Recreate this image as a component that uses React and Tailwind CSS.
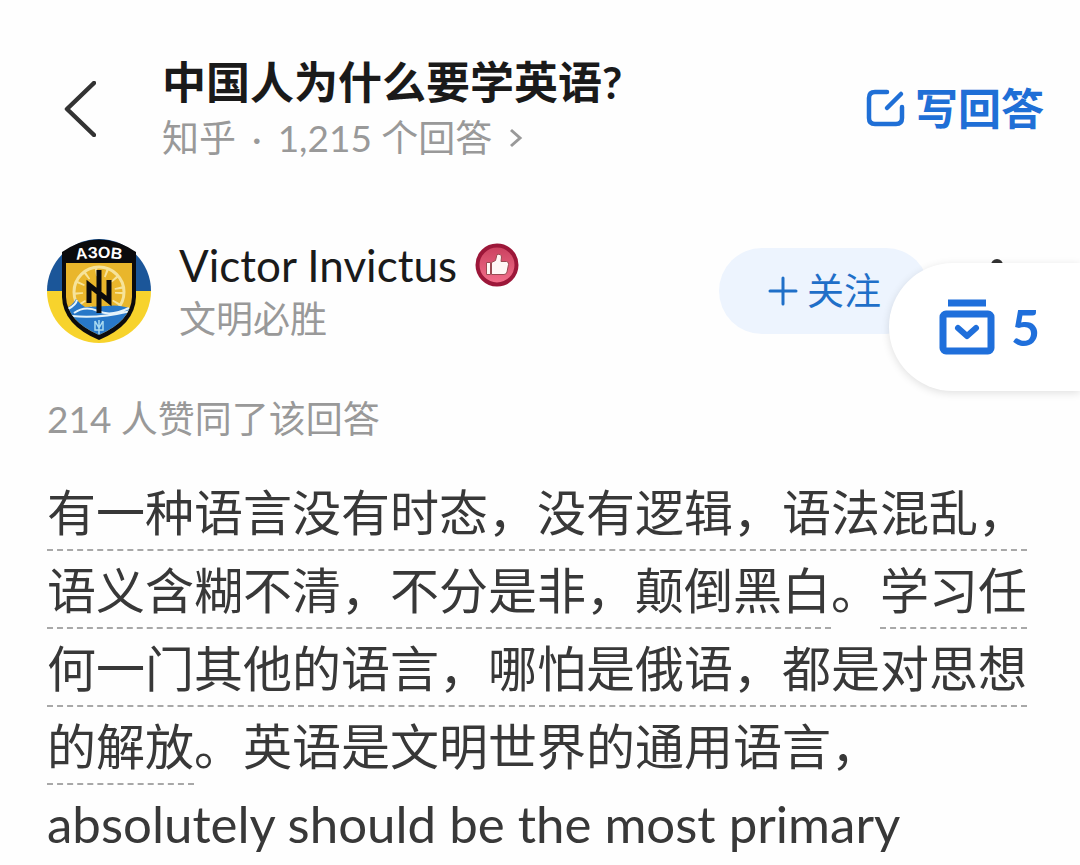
import React from 'react';

const answer = {
  question: '中国人为什么要学英语?',
  source: '知乎',
  answerCount: '1,215',
  author: 'Victor Invictus',
  bio: '文明必胜',
  votes: 214,
  pending: 5,
};

const BackIcon = () => (
  <svg className="w-8 h-14" viewBox="0 0 32 56" fill="none" stroke="#333" strokeWidth="4.5" strokeLinecap="round" strokeLinejoin="round">
    <path d="M30 2 3 28 30 54" />
  </svg>
);

const WriteIcon = () => (
  <svg className="w-10 h-10" viewBox="0 0 40 40" fill="none" stroke="#1f6fd6" strokeWidth="4.5" strokeLinecap="round">
    <path d="M22 3H10Q4 3 4 9V29Q4 35 10 35H31Q37 35 37 29V18" />
    <path d="M22 19 36 5" />
  </svg>
);

const StackIcon = () => (
  <svg className="w-14 h-14" viewBox="0 0 56 56" fill="none" stroke="#1f6fdb">
    <path d="M9 4H47" strokeWidth="7" />
    <rect x="4" y="15" width="48" height="37" rx="3" strokeWidth="7" />
    <path d="M19 29 28 37 37 29" strokeWidth="6" strokeLinecap="round" strokeLinejoin="round" />
  </svg>
);

const BadgeIcon = () => (
  <svg className="w-11 h-11" viewBox="0 0 44 44">
    <defs>
      <linearGradient id="badge" x1="0" y1="0" x2="0" y2="1">
        <stop offset="0" stopColor="#c9405e" />
        <stop offset="1" stopColor="#f4708c" />
      </linearGradient>
    </defs>
    <circle cx="22" cy="22" r="19.5" fill="url(#badge)" stroke="#9c1739" strokeWidth="4" />
    <path
      d="M11.5 19.500h4v12h-4zM16.500 19.500 20.500 17.500 22 11.500Q26 10.500 26.500 14L26 18.500H31.500Q34 19 33.500 21.500L32 29Q31.500 31.500 29 31.500H16.500Z"
      fill="#fff8f6"
      stroke="#9b4a52"
      strokeWidth="1"
      strokeLinejoin="round"
    />
  </svg>
);

const Avatar = () => (
  <svg className="w-26 h-26 shrink-0" viewBox="0 0 104 104" role="img" aria-label={answer.author}>
    <defs>
      <clipPath id="disc">
        <circle cx="52" cy="52" r="52" />
      </clipPath>
      <clipPath id="shield">
        <path d="M19 24H85V58Q84 82 52 96Q20 82 19 58Z" />
      </clipPath>
      <path id="arc" d="M14 24Q52 14 90 24" />
    </defs>
    <g clipPath="url(#disc)">
      <rect width="104" height="52" fill="#1b5699" />
      <rect y="52" width="104" height="52" fill="#f7d32c" />
    </g>
    <path d="M15 13Q52 -12 89 13V58Q88 86 52 101Q16 86 15 58Z" fill="#0b0b0d" />
    <g clipPath="url(#shield)">
      <rect x="15" y="24" width="74" height="80" fill="#e9b62b" />
      <circle cx="52" cy="53" r="25" fill="none" stroke="#f6e39a" strokeWidth="3" />
      <circle cx="52" cy="53" r="20" fill="none" stroke="#f6e39a" strokeWidth="8" strokeDasharray="2 8" />
      <path d="M15 70Q24 69 29 60Q33 65 38 68L60 67Q75 65 89 72V104H15Z" fill="#2878c8" />
      <path d="M21 70Q29 66 30 61M27 74Q38 66 51 72T82 69M25 77Q50 80 84 72" fill="none" stroke="#e5f3fa" strokeWidth="2" />
    </g>
    <path d="M42 64V46L62 62V41M52 31V74" fill="none" stroke="#0b0b0d" strokeWidth="5" />
    <path d="M48 82V91H56V82M52 81V95M48 82 52 89 56 82" fill="none" stroke="#a9daf0" strokeWidth="1.500" />
    <text fill="#fff" fontSize="16" fontWeight="700" fontFamily="Liberation Sans, sans-serif" textAnchor="middle">
      <textPath href="#arc" startOffset="50%">АЗОВ</textPath>
    </text>
  </svg>
);

const Marked = ({ children }) => (
  <span className="border-b-2 border-dashed border-[#a8a8a8] pb-2">{children}</span>
);

const App = () => (
  <div lang="zh-CN" className="min-h-screen overflow-hidden bg-[#fefefe] font-[Lato,'Noto_Sans_CJK_SC',sans-serif]">
    <header className="flex items-center pt-[53px] pl-16 pr-9">
      <button type="button" aria-label="返回" className="mr-[66px] shrink-0">
        <BackIcon />
      </button>
      <div className="flex-1">
        <h1 className="text-[44px] leading-[58px] font-bold text-[#1a1a1a]">{answer.question}</h1>
        <a href="#answers" className="flex items-center gap-4 text-[37px] leading-[54px] text-[#999]">
          <span>{answer.source}</span>
          <span>·</span>
          <span>{answer.answerCount} 个回答</span>
          <svg className="w-4 h-6" viewBox="0 0 16 24" fill="none" stroke="#999" strokeWidth="3">
            <path d="M3 4 12 12 3 20" />
          </svg>
        </a>
      </div>
      <button type="button" className="flex shrink-0 items-center gap-2.5 text-[43px] leading-[58px] font-bold text-[#1f6fd6]">
        <WriteIcon />
        写回答
      </button>
    </header>

    <main className="px-[47px]">
      <section className="relative mt-[72px] flex items-center">
        <Avatar />
        <div className="ml-7 flex-1">
          <div className="flex items-center gap-[18px]">
            <span className="text-[44px] leading-[56px] text-[#1a1a1a]">{answer.author}</span>
            <BadgeIcon />
          </div>
          <p className="text-[37px] leading-[52px] text-[#999]">{answer.bio}</p>
        </div>
        <button type="button" className="flex h-[86px] items-center gap-2 rounded-full bg-[#edf4fe] px-12 text-[37px] text-[#1f6fc8]">
          <svg className="w-8 h-8" viewBox="0 0 32 32" stroke="#1f6fc8" strokeWidth="3" strokeLinecap="round">
            <path d="M3 16H29M16 3V29" />
          </svg>
          关注
        </button>
        <button type="button" aria-label="更多" className="ml-14 mr-6">
          <svg className="w-6 h-16" viewBox="0 0 24 64" fill="#333">
            <circle cx="12" cy="6" r="6" />
            <circle cx="12" cy="32" r="6" />
            <circle cx="12" cy="58" r="6" />
          </svg>
        </button>
        <button
          type="button"
          className="absolute -right-[47px] top-[26px] flex h-32 items-center gap-4 rounded-l-full bg-white pl-[50px] pr-10 text-[50px] font-bold text-[#1f6fdb] shadow-[0_2px_8px_rgba(0,0,0,0.12)]"
        >
          <StackIcon />
          {answer.pending}
        </button>
      </section>

      <p className="mt-[46px] text-[37px] leading-[56px] text-[#999]">{answer.votes} 人赞同了该回答</p>

      <p className="mt-[26px] text-[49px] leading-[78px] text-[#383838]">
        <Marked>有一种语言没有时态，没有逻辑，语法混乱，语义含糊不清，不分是非，颠倒黑白</Marked>。
        <Marked>学习任何一门其他的语言，哪怕是俄语，都是对思想的解放</Marked>
        。英语是文明世界的通用语言，
        <span className="text-[51px]">absolutely should be the most primary</span>
      </p>
    </main>
  </div>
);

export default App;
